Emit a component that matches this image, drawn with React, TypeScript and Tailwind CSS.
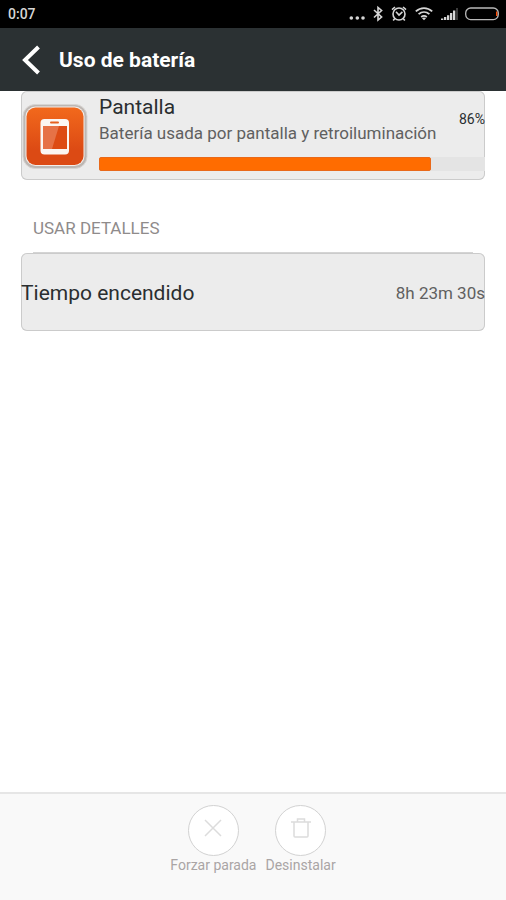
import type { ReactNode } from "react";

function StatusBar() {
  return (
    <div className="flex h-7 items-center justify-between bg-black pl-2 pr-[7px] text-[#d6d6d6]">
      <time className="text-sm font-medium">0:07</time>
      <div className="flex h-7 items-center" aria-hidden="true">
        <svg className="mr-2 h-7 w-4" viewBox="0 0 16 28" fill="currentColor">
          <circle cx="2.300" cy="18" r="1.800" />
          <circle cx="8.300" cy="18" r="1.800" />
          <circle cx="14" cy="18" r="1.800" />
        </svg>
        <svg
          className="mr-2 h-7 w-[10px]"
          viewBox="0 0 10 28"
          fill="none"
          stroke="currentColor"
          strokeWidth="1.6"
        >
          <path d="M1 10 8.600 17 5 20V7.500l3.600 3L1 17.500" />
        </svg>
        <svg
          className="mr-2 h-7 w-4"
          viewBox="0 0 16 28"
          fill="none"
          stroke="currentColor"
          strokeWidth="1.6"
        >
          <circle cx="8" cy="14" r="6" />
          <path d="M5 11.800 8 15l3.400-3.200M1 9.600 4 7M15 9.600 12 7M3.800 18.400 2.200 20.400M12.200 18.400l1.600 2" />
        </svg>
        <svg
          className="mr-2 h-7 w-[18px]"
          viewBox="0 0 18 28"
          fill="none"
          stroke="currentColor"
          strokeWidth="1.8"
        >
          <path d="M.8 11.400c4.800-4.400 11.600-4.400 16.400 0M3.600 14.200c3.200-2.900 7.600-2.900 10.800 0M6.200 17c1.800-1.500 3.800-1.500 5.600 0" />
          <path d="M7 18.200c1.300-.9 2.700-.9 4 0L9 20.200Z" fill="currentColor" stroke="none" />
        </svg>
        <svg className="mr-[7px] h-7 w-[17px]" viewBox="0 0 17 28" fill="currentColor">
          <path d="M0 18.500h2.300V20H0zM3 17h2.300v3H3zM6 15.300h2.300V20H6zM9 13h2.300v7H9zM12 10.500h2.300V20H12z" />
          <path d="M15 8h2v12h-2z" fill="#3a3a3a" />
        </svg>
        <svg className="h-7 w-[34px]" viewBox="0 0 34 28" fill="none">
          <path d="M31 11.500h1.500v4.500H31z" fill="#ff4a00" />
          <rect x=".7" y="8" width="32.600" height="11.600" rx="5" stroke="#b9b9b9" strokeWidth="1.300" />
        </svg>
      </div>
    </div>
  );
}

function ScreenIcon() {
  return (
    <svg className="size-[66px] shrink-0" viewBox="0 0 66 66" role="img" aria-label="Pantalla">
      <defs>
        <linearGradient id="tile" x1="0" y1="0" x2="0" y2="1">
          <stop offset="0" stopColor="#f2691c" />
          <stop offset=".75" stopColor="#dc4a14" />
        </linearGradient>
      </defs>
      <rect x="1" y="1.500" width="64" height="64" rx="12" fill="#bdb7b3" stroke="#d8d5d3" />
      <rect x="3.500" y="3.500" width="59" height="59.500" rx="10" fill="#f4eeea" />
      <rect x="4.500" y="4.500" width="57" height="57.500" rx="9" fill="url(#tile)" />
      <rect x="18.500" y="16" width="28.500" height="35.500" rx="4" fill="#fbf6f2" />
      <rect x="28" y="18.500" width="9" height="2" rx="1" fill="#e5601f" />
      <rect x="21" y="23" width="24" height="23" fill="#dd4b14" />
      <path d="M21 23h16l-7 23h-9z" fill="#e67246" />
    </svg>
  );
}

function Card({ className, children }: { className: string; children: ReactNode }) {
  return (
    <div className={`flex items-center rounded-md bg-[#ececec] ring-1 ring-inset ring-[#cbcbcb] ${className}`}>
      {children}
    </div>
  );
}

function RoundAction({ label, children }: { label: string; children: ReactNode }) {
  return (
    <button type="button" disabled className="flex flex-col items-center text-sm text-[#aaa5a5]">
      <span className="flex size-[51px] items-center justify-center rounded-full border border-[#d2d2d2] bg-white pb-1.5 text-[#dcdcdc]">
        {children}
      </span>
      <span className="leading-[18px]">{label}</span>
    </button>
  );
}

export default function App() {
  const usage = 86;
  return (
    <div className="flex min-h-screen flex-col bg-white font-[Roboto,sans-serif] text-[#2a2e30]">
      <StatusBar />
      <header className="flex h-[63px] items-center gap-[18px] bg-[#2b3133] pl-[22px] text-white">
        <button type="button" aria-label="Atrás">
          <svg className="h-8 w-[19px]" viewBox="0 0 19 32" fill="none" stroke="currentColor" strokeWidth="4">
            <path d="M16.500 3 3 16l13.500 13" />
          </svg>
        </button>
        <h1 className="pt-0.5 text-[21px] font-bold">Uso de batería</h1>
      </header>

      <main className="flex-1 px-[21px]">
        <Card className="h-[89px] gap-[11px] pl-px">
          <ScreenIcon />
          <div className="flex-1 pb-2">
            <div className="flex items-center justify-between">
              <div>
                <h2 className="text-[21px] leading-7">Pantalla</h2>
                <p className="text-[17px] leading-6 text-[#606060]">
                  Batería usada por pantalla y retroiluminación
                </p>
              </div>
              <span className="text-sm">{usage}%</span>
            </div>
            <div
              className="mt-3 h-[14px] bg-[#e4e4e4]"
              role="progressbar"
              aria-label="Batería usada"
              aria-valuenow={usage}
              aria-valuemin={0}
              aria-valuemax={100}
            >
              <div
                className="h-full rounded-xs border border-[#e9691a] bg-[#ff6c00]"
                style={{ width: `${usage}%` }}
              />
            </div>
          </div>
        </Card>

        <h2 className="mx-3 mt-9 border-b border-[#d4d4d4] pb-3 text-[17px] leading-6 text-[#8f8b8b]">
          USAR DETALLES
        </h2>
        <Card className="h-[78px] justify-between pt-0.5">
          <span className="text-[21px] leading-7">Tiempo encendido</span>
          <span className="text-[17px] leading-6 text-[#606060]">8h 23m 30s</span>
        </Card>
      </main>

      <footer className="flex h-[108px] items-start justify-center gap-[9px] border-t-2 border-[#e6e6e6] bg-[#f9f9f9] pt-[11px]">
        <RoundAction label="Forzar parada">
          <svg className="size-5" viewBox="0 0 20 20" fill="none" stroke="currentColor" strokeWidth="1.500">
            <path d="m2 2 16 16M18 2 2 18" />
          </svg>
        </RoundAction>
        <RoundAction label="Desinstalar">
          <svg className="size-5" viewBox="0 0 20 20" fill="none" stroke="currentColor" strokeWidth="1.500">
            <path d="M0 4h20M6.500 4V1h7v3M3 4v14q0 1 1 1h12q1 0 1-1V4" />
          </svg>
        </RoundAction>
      </footer>
    </div>
  );
}
